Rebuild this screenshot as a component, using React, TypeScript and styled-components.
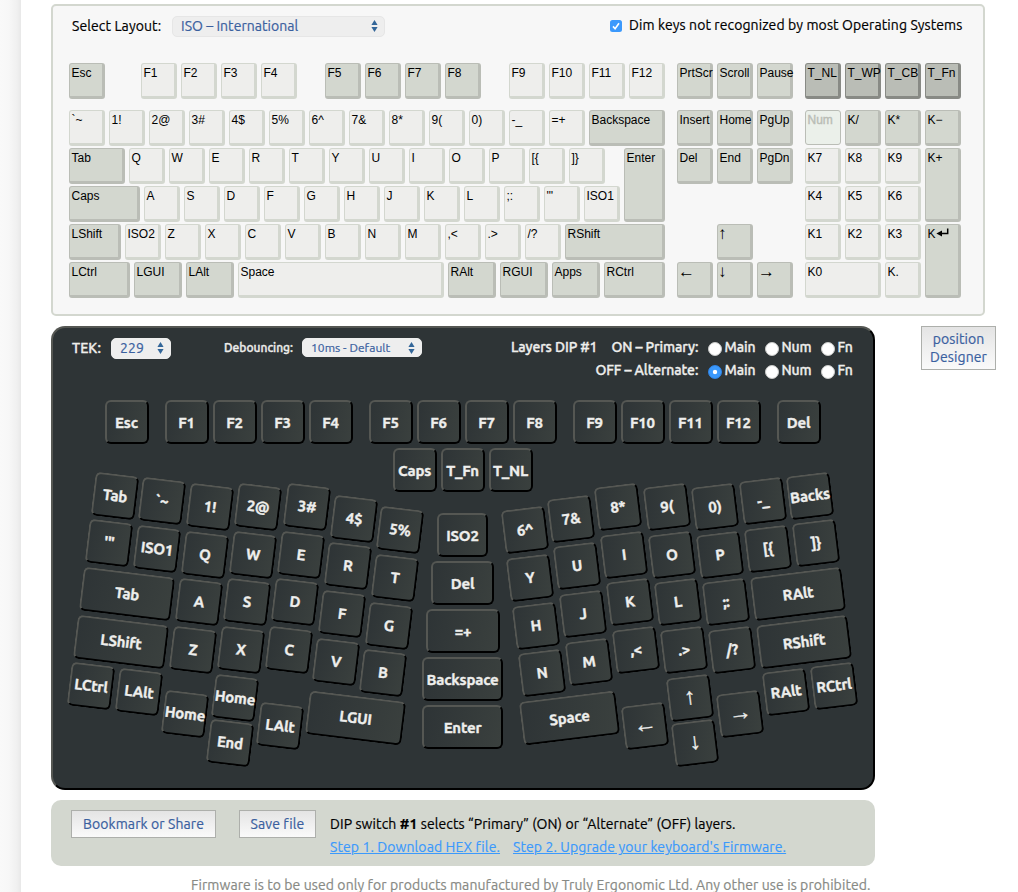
import React from "react";
import styled, { createGlobalStyle, css } from "styled-components";

const GlobalStyle = createGlobalStyle`
  * { box-sizing: border-box; }
  body { margin: 0; background: #fff; font-family: "Ubuntu", "Noto Sans", sans-serif; color: #000; }
`;

const Page = styled.div`
  display: flex;
  width: 1018px;
  height: 892px;
  overflow: hidden;
`;

const Gutter = styled.div`
  flex: none;
  width: 21px;
  background: linear-gradient(to right, #f9f9f9 0, #f7f7f7 9px, #f0f0f0 17px, #e8e8e8 21px);
`;

const Content = styled.main`
  flex: none;
  width: 997px;
  padding: 4px 0 0 30px;
  -webkit-text-stroke: 0.2px currentColor;
`;

/* ---------- shared text and controls ---------- */

interface TextProps {
  $size?: number;
  $w?: number;
  $track?: number;
  $indent?: number;
}

const Text = styled.span<TextProps>`
  flex: none;
  display: block;
  width: ${(p) => (p.$w ? `${p.$w}px` : "auto")};
  margin-left: ${(p) => p.$indent ?? 0}px;
  font-size: ${(p) => p.$size ?? 14}px;
  letter-spacing: ${(p) => p.$track ?? 0.1}px;
  line-height: 20px;
  white-space: nowrap;
`;

const BoardText = styled(Text)`
  font-weight: 500;
  -webkit-text-stroke: 0.35px currentColor;
`;

const SelectBox = styled.div<{ $w: number; $h: number; $size: number; $line?: string; $lift?: number }>`
  flex: none;
  display: flex;
  align-items: center;
  justify-content: space-between;
  width: ${(p) => p.$w}px;
  height: ${(p) => p.$h}px;
  padding: 0 6px ${(p) => p.$lift ?? 0}px 8px;
  border: 1px solid ${(p) => p.$line ?? "#eeeeee"};
  border-radius: 5px;
  background: #eeeeee;
  color: #3a609f;
  font-size: ${(p) => p.$size}px;
  letter-spacing: 0.05px;
  line-height: 18px;
  white-space: nowrap;
`;

const Arrows = () => (
  <svg width="7" height="14" viewBox="0 0 7 14" fill="#336699">
    <path d="M3.5 1 6.6 6H.4zM3.5 13 .4 8h6.2z" />
  </svg>
);

const Button = styled.button<{ $w: number; $h: number; $after?: number }>`
  flex: none;
  width: ${(p) => p.$w}px;
  height: ${(p) => p.$h}px;
  margin-right: ${(p) => p.$after ?? 0}px;
  padding: 0;
  border: 1px solid #adafab;
  background: linear-gradient(#e4e4e4, #fafafa);
  color: #3a609f;
  font: 14px/18px "Ubuntu", "Noto Sans", sans-serif;
  letter-spacing: 0.1px;
  -webkit-text-stroke: 0.2px currentColor;
`;

/* ---------- layout (source) keyboard ---------- */

const LayoutPanel = styled.section`
  width: 934px;
  height: 312px;
  padding: 10px 0 0 16px;
  border: 2px solid #d3d7cf;
  border-radius: 5px;
  background: #f7f7f7;
`;

const LayoutBar = styled.div`
  display: flex;
  height: 47px;
  padding-left: 3px;
`;

const DimOption = styled.label`
  display: flex;
  margin: -1px 0 0 225px;
`;

const CheckBox = styled.span`
  flex: none;
  display: block;
  width: 12px;
  height: 12px;
  margin: 5px 7px 0 0;
  border-radius: 2.5px;
  background: #3b99fc;
  svg { display: block; }
`;

const Board = styled.div`
  display: flex;
  gap: 12px;
`;

const Block = styled.div<{ $w: number }>`
  flex: none;
  width: ${(p) => p.$w}px;
`;

const Row = styled.div<{ $after?: number }>`
  display: flex;
  align-items: flex-start;
  gap: 4px;
  height: 36px;
  margin-bottom: ${(p) => p.$after ?? 2}px;
`;

type Tone = "light" | "mid" | "dark" | "dim";

const tones = {
  light: css`background: #eeeeec; border-color: #d3d7cf;`,
  mid: css`background: #d3d7cf; border-color: #babdb6;`,
  dark: css`background: #babdb6; border-color: #888a85;`,
  dim: css`background: #ebf0ea; border-color: #babdb6; color: #babdb6; border-width: 1px; height: 35px; -webkit-text-stroke: 0.4px #babdb6;`,
};

const Cap = styled.div<{ $w: number; $tall: boolean; $gap: number; $tone: Tone }>`
  flex: none;
  width: ${(p) => p.$w}px;
  height: ${(p) => (p.$tall ? 74 : 36)}px;
  margin-left: ${(p) => p.$gap}px;
  padding: 2px 0 0 1.5px;
  border-style: solid;
  border-width: 1px 3px 3px 1px;
  border-radius: 3px;
  color: #000;
  font: 12px/14px "Liberation Sans", Arial, sans-serif;
  -webkit-text-stroke: 0;
  white-space: nowrap;
  ${(p) => tones[p.$tone]}
`;

const CapArrow = styled.span`
  display: block;
  margin-left: -1.5px;
  font: 17px/13px "Liberation Sans", sans-serif;
`;

interface CapSpec {
  t: React.ReactNode;
  w?: number;
  gap?: number;
  tall?: boolean;
  tone?: Tone;
}

const ReturnGlyph = () => (
  <svg width="13" height="10" viewBox="0 0 13 10">
    <path d="M11.7.5v5H5" fill="none" stroke="#000" strokeWidth="1.5" />
    <path d="M.4 5.5 6 2.4v6.2z" fill="#000" />
  </svg>
);

const many = (labels: string, tone?: Tone): CapSpec[] => labels.split(" ").map((t) => ({ t, tone }));
const gapFirst = (gap: number, keys: CapSpec[]): CapSpec[] => keys.map((k, i) => (i ? k : { ...k, gap }));
const mid = (t: React.ReactNode, w?: number, extra: Partial<CapSpec> = {}): CapSpec => ({ t, w, tone: "mid", ...extra });
const arrow = (t: string, extra: Partial<CapSpec> = {}) => mid(<CapArrow>{t}</CapArrow>, 36, extra);

const mainRows: CapSpec[][] = [
  [mid("Esc"), ...gapFirst(32, many("F1 F2 F3 F4")), ...gapFirst(24, many("F5 F6 F7 F8", "mid")), ...gapFirst(24, many("F9 F10 F11 F12"))],
  [...many("`~ 1! 2@ 3# 4$ 5% 6^ 7& 8* 9( 0) -_ =+"), mid("Backspace", 76)],
  [mid("Tab", 56), ...many("Q W E R T Y U I O P [{ ]}"), mid("Enter", 41, { tall: true, gap: 15 })],
  [mid("Caps", 71), ...many("A S D F G H J K L ;: '\" ISO1")],
  [mid("LShift", 52), ...many("ISO2 Z X C V B N M ,< .> /?"), mid("RShift", 100)],
  [mid("LCtrl", 61), mid("LGUI", 48), mid("LAlt", 48), { t: "Space", w: 206 }, mid("RAlt", 48), mid("RGUI", 48), mid("Apps", 48), mid("RCtrl", 61)],
];

const navRows: CapSpec[][] = [
  many("PrtScr Scroll Pause", "mid"),
  many("Insert Home PgUp", "mid"),
  many("Del End PgDn", "mid"),
  [],
  [arrow("↑", { gap: 40 })],
  [arrow("←"), arrow("↓"), arrow("→")],
];

const padRows: CapSpec[][] = [
  many("T_NL T_WP T_CB T_Fn", "dark"),
  [{ t: "Num", tone: "dim" }, ...many("K/ K* K−", "mid")],
  [...many("K7 K8 K9"), mid("K+", 36, { tall: true })],
  many("K4 K5 K6"),
  [...many("K1 K2 K3"), mid(<>K<ReturnGlyph /></>, 36, { tall: true })],
  [{ t: "K0", w: 76 }, { t: "K." }],
];

const KeyBlock = ({ rows, width }: { rows: CapSpec[][]; width: number }) => (
  <Block $w={width}>
    {rows.map((row, r) => (
      <Row key={r} $after={r === 0 ? 11 : 2}>
        {row.map((k, i) => (
          <Cap key={i} $w={k.w ?? 36} $tall={!!k.tall} $gap={k.gap ?? 0} $tone={k.tone ?? "light"}>
            {k.t}
          </Cap>
        ))}
      </Row>
    ))}
  </Block>
);

/* ---------- TEK keyboard ---------- */

const Middle = styled.div`
  display: flex;
  gap: 46px;
  margin: 10px 0;
`;

const TekPanel = styled.section`
  position: relative;
  flex: none;
  width: 824px;
  height: 464px;
  padding: 10px 0 0 19px;
  border: 2px solid;
  border-color: #555753 #000 #000 #555753;
  border-radius: 14px;
  background: #2e3436;
  color: #eeeeec;
`;

const TekBar = styled.div`
  display: flex;
`;

const Layers = styled.div`
  display: flex;
  flex-direction: column;
  gap: 3px;
  width: 350px;
  margin: -1px 0 0 82.5px;
`;

const LayerRow = styled.div`
  display: flex;
  justify-content: flex-end;
  height: 20px;
`;

const Radio = styled.span<{ $on: boolean }>`
  flex: none;
  width: 14px;
  height: 14px;
  margin: 5px 3px 0 0;
  border: 1px solid ${(p) => (p.$on ? "#2f86ea" : "#c9cac9")};
  border-radius: 50%;
  background: ${(p) => (p.$on ? "radial-gradient(circle, #fff 0 1.8px, #3b99fc 2.6px)" : "#fff")};
`;

const TekKey = styled.div<{ $x: number; $y: number; $w: number; $turn: number }>`
  position: absolute;
  left: ${(p) => p.$x - 53 - p.$w / 2}px;
  top: ${(p) => p.$y - 328 - 22}px;
  width: ${(p) => p.$w}px;
  height: 44px;
  display: flex;
  align-items: center;
  justify-content: center;
  padding: ${(p) => (p.$turn ? "0.5px 0 0 0" : p.$w > 44 ? "2px 0 0 0" : "2px 1px 0 0")};
  border: 2px solid;
  border-color: #555753 #000 #000 #555753;
  border-radius: 6px;
  background: linear-gradient(100deg, #2e3436, #3a403e);
  color: #eeeeec;
  font: bold 15px/20px "Ubuntu", "Noto Sans", "Liberation Sans", sans-serif;
  letter-spacing: -0.2px;
  -webkit-text-stroke: 0.35px currentColor;
  white-space: nowrap;
  transform: rotate(${(p) => p.$turn}deg);
`;

const TekArrow = styled.span`
  margin-top: -5px;
  font: 23px/16px "Liberation Sans", sans-serif;
`;

type TekSpec = [label: string, x: number, y: number, w?: number];

const AXIS = 462.5;
const STEP_X = -5.85;
const STEP_Y = 47.64;

const columns: [number, number][] = [
  [114.7, 495.5], [162.4, 501.2], [210.4, 507], [258.4, 507], [306.6, 507], [353.8, 518.6], [400.4, 530.4],
];

const at = (label: string, col: number, row: number): TekSpec => [
  label,
  columns[col][0] + STEP_X * row,
  columns[col][1] + STEP_Y * row,
];

const half = (rows: string[][], wide: [string, string], cluster: string[]): TekSpec[] => [
  ...rows[0].map((t, i) => at(t, i, 0)),
  ...rows[1].map((t, i) => at(t, i, 1)),
  ...rows[2].map((t, i) => at(t, i + 2, 2)),
  ...rows[3].map((t, i) => at(t, i + 2, 3)),
  ...rows[4].map((t, i) => at(t, i, 4)),
  [wide[0], 126.8, 593.8, 92],
  [wide[1], 121, 641.5, 92],
  [cluster[0], 184.8, 714.4],
  [cluster[1], 235.3, 697.5],
  [cluster[2], 229.6, 743.3],
  [cluster[3], 280, 726.3],
  [cluster[4], 355.8, 718.4, 97],
];

const leftHalf = half(
  [
    ["Tab", "`~", "1!", "2@", "3#", "4$", "5%"],
    ["'\"", "ISO1", "Q", "W", "E", "R", "T"],
    ["A", "S", "D", "F", "G"],
    ["Z", "X", "C", "V", "B"],
    ["LCtrl", "LAlt"],
  ],
  ["Tab", "LShift"],
  ["Home", "Home", "End", "LAlt", "LGUI"],
);

const rightHalf = half(
  [
    ["Backs", "-_", "0)", "9(", "8*", "7&", "6^"],
    ["]}", "[{", "P", "O", "I", "U", "Y"],
    [";:", "L", "K", "J", "H"],
    ["/?", ".>", ",<", "M", "N"],
    ["RCtrl", "RAlt"],
  ],
  ["RAlt", "RShift"],
  ["→", "↑", "↓", "←", "Space"],
).map(([t, x, y, w]): TekSpec => [t, 2 * AXIS - x, y, w]);

const straight: TekSpec[] = [
  ["Esc", 127, 422],
  ...["F1", "F2", "F3", "F4"].map((t, i): TekSpec => [t, 187 + 48 * i, 422]),
  ...["F5", "F6", "F7", "F8"].map((t, i): TekSpec => [t, 391 + 48 * i, 422]),
  ...["F9", "F10", "F11", "F12"].map((t, i): TekSpec => [t, 595 + 48 * i, 422]),
  ["Del", 799, 422],
  ["Caps", 415, 470],
  ["T_Fn", 463, 470],
  ["T_NL", 511, 470],
  ["ISO2", 462.5, 535, 51],
  ["Del", 462.5, 583, 63],
  ["=+", 463, 631, 74],
  ["Backspace", 462.5, 679, 81],
  ["Enter", 462.5, 727, 81],
];

const Keys = ({ keys, turn }: { keys: TekSpec[]; turn: number }) => (
  <>
    {keys.map(([t, x, y, w], i) => (
      <TekKey key={i} $x={x} $y={y} $w={w ?? 44} $turn={turn}>
        {"←↑→↓".includes(t) ? <TekArrow>{t}</TekArrow> : t}
      </TekKey>
    ))}
  </>
);

const LayerChoices = ({ selected }: { selected?: string }) => (
  <>
    {([["Main", 40], ["Num", 39], ["Fn", 17]] as [string, number][]).map(([name, w]) => (
      <React.Fragment key={name}>
        <Radio $on={selected === name} />
        <BoardText $w={w} $track={-0.1}>{name}</BoardText>
      </React.Fragment>
    ))}
  </>
);

/* ---------- footer ---------- */

const Footer = styled.section`
  display: flex;
  width: 824px;
  height: 66px;
  padding: 10px 0 0 20px;
  border-radius: 10px;
  background: #d3d7cf;
`;

const FooterNotes = styled.div`
  margin-left: 14px;
  padding-top: 4px;
`;

const Links = styled.div`
  display: flex;
  margin-top: 3px;
`;

const Link = styled.a<{ $w: number }>`
  width: ${(p) => p.$w}px;
  color: #3b99fc;
  font-size: 14px;
  letter-spacing: 0.1px;
  line-height: 20px;
  text-decoration: underline;
  white-space: nowrap;
`;

const Legal = styled.p`
  margin: 8px 0 0 140px;
  color: #888a85;
  font-size: 14px;
  letter-spacing: 0.09px;
  line-height: 22px;
  white-space: nowrap;
`;

export default function App() {
  return (
    <Page>
      <GlobalStyle />
      <Gutter />
      <Content>
        <LayoutPanel>
          <LayoutBar>
            <Text $w={100}>Select Layout:</Text>
            <SelectBox $w={213} $h={21} $size={14} $line="#e6e6e6" $lift={1}>
              ISO – International
              <Arrows />
            </SelectBox>
            <DimOption>
              <CheckBox>
                <svg width="12" height="12" viewBox="0 0 12 12">
                  <path d="M3 6.4 5.1 8.8 9 3.2" fill="none" stroke="#fff" strokeWidth="1.6" />
                </svg>
              </CheckBox>
              <Text>Dim keys not recognized by most Operating Systems</Text>
            </DimOption>
          </LayoutBar>
          <Board>
            <KeyBlock rows={mainRows} width={596} />
            <KeyBlock rows={navRows} width={116} />
            <KeyBlock rows={padRows} width={156} />
          </Board>
        </LayoutPanel>

        <Middle>
          <TekPanel>
            <TekBar>
              <BoardText $w={39}>TEK:</BoardText>
              <SelectBox $w={60} $h={21} $size={14} $lift={1}>
                229
                <Arrows />
              </SelectBox>
              <BoardText $w={78} $size={12} $track={0} $indent={53}>Debouncing:</BoardText>
              <SelectBox $w={120} $h={19} $size={12}>
                10ms - Default
                <Arrows />
              </SelectBox>
              <Layers>
                <LayerRow>
                  <BoardText $w={100.5} $track={-0.1}>Layers DIP #1</BoardText>
                  <BoardText $w={96} $track={-0.1}>ON – Primary:</BoardText>
                  <LayerChoices />
                </LayerRow>
                <LayerRow>
                  <BoardText $w={112} $track={-0.1}>OFF – Alternate:</BoardText>
                  <LayerChoices selected="Main" />
                </LayerRow>
              </Layers>
            </TekBar>
            <Keys keys={straight} turn={0} />
            <Keys keys={leftHalf} turn={7} />
            <Keys keys={rightHalf} turn={-7} />
          </TekPanel>
          <Button $w={75} $h={44}>
            position
            <br />
            Designer
          </Button>
        </Middle>

        <Footer>
          <Button $w={145} $h={28} $after={23}>Bookmark or Share</Button>
          <Button $w={77} $h={28}>Save file</Button>
          <FooterNotes>
            <Text>
              DIP switch <b>#1</b> selects “Primary” (ON) or “Alternate” (OFF) layers.
            </Text>
            <Links>
              <Link $w={183}>Step 1. Download HEX file.</Link>
              <Link $w={273}>Step 2. Upgrade your keyboard's Firmware.</Link>
            </Links>
          </FooterNotes>
        </Footer>
        <Legal>
          Firmware is to be used only for products manufactured by Truly Ergonomic Ltd. Any other use is prohibited.
        </Legal>
      </Content>
    </Page>
  );
}
